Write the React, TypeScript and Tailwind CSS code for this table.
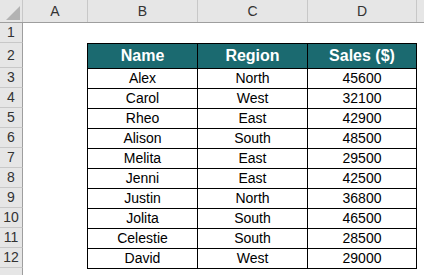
const rows = [
  { name: "Alex", region: "North", sales: 45600 },
  { name: "Carol", region: "West", sales: 32100 },
  { name: "Rheo", region: "East", sales: 42900 },
  { name: "Alison", region: "South", sales: 48500 },
  { name: "Melita", region: "East", sales: 29500 },
  { name: "Jenni", region: "East", sales: 42500 },
  { name: "Justin", region: "North", sales: 36800 },
  { name: "Jolita", region: "South", sales: 46500 },
  { name: "Celestie", region: "South", sales: 28500 },
  { name: "David", region: "West", sales: 29000 },
];

const RowNum = ({ n, h }: { n: number | string; h: string }) => (
  <div
    className={`w-[23px] ${h} shrink-0 bg-[#e6e6e6] border-r border-b border-r-[#9e9e9e] border-b-[#c8c8c8] flex items-center justify-center text-[14px] text-[#333]`}
  >
    {n}
  </div>
);

const App = () => {
  return (
    <div
      className="w-[424px] h-[275px] overflow-hidden bg-white"
      style={{ fontFamily: '"Liberation Sans", Arial, sans-serif' }}
    >
      {/* column headers */}
      <div className="flex h-[23px] bg-[#e6e6e6] border-b border-[#9e9e9e] text-[14px] text-[#333]">
        <div className="w-[23px] shrink-0 border-r border-[#c8c8c8] relative">
          <svg className="absolute left-[6px] top-[6px]" width="14" height="14" viewBox="0 0 14 14">
            <polygon points="14,0 14,14 0,14" fill="#b3b3b3" />
          </svg>
        </div>
        <div className="w-[65px] shrink-0 border-r border-[#c8c8c8] flex items-center justify-center">A</div>
        <div className="w-[110px] shrink-0 border-r border-[#c8c8c8] flex items-center justify-center">B</div>
        <div className="w-[110px] shrink-0 border-r border-[#c8c8c8] flex items-center justify-center">C</div>
        <div className="w-[109px] shrink-0 border-r border-[#c8c8c8] flex items-center justify-center">D</div>
        <div className="flex-1" />
      </div>

      {/* row 1 */}
      <div className="flex">
        <RowNum n={1} h="h-[20px]" />
      </div>

      {/* row 2 - table header */}
      <div className="flex">
        <RowNum n={2} h="h-[25px]" />
        <div className="w-[64px] shrink-0" />
        <div className="flex h-[25px] bg-[#1b6a70] text-white font-bold text-[16px] border-t border-black">
          <div className="w-[111px] border-l border-r border-black flex items-center justify-center">Name</div>
          <div className="w-[110px] border-r border-black flex items-center justify-center">Region</div>
          <div className="w-[109px] border-r border-black flex items-center justify-center">Sales ($)</div>
        </div>
      </div>

      {rows.map((r, i) => (
        <div key={r.name} className="flex">
          <RowNum n={i + 3} h="h-[20px]" />
          <div className="w-[64px] shrink-0" />
          <div className="flex h-[20px] text-[14px] text-black">
            <div className="w-[111px] border-l border-r border-t border-black flex items-center justify-center">{r.name}</div>
            <div className="w-[110px] border-r border-t border-black flex items-center justify-center">{r.region}</div>
            <div className="w-[109px] border-r border-t border-black flex items-center justify-center">{r.sales}</div>
          </div>
        </div>
      ))}

      {/* row 13 */}
      <div className="flex">
        <RowNum n="" h="h-[20px]" />
        <div className="w-[64px] shrink-0" />
        <div className="w-[330px] h-0 border-t border-black" />
      </div>
    </div>
  );
};

export default App;
